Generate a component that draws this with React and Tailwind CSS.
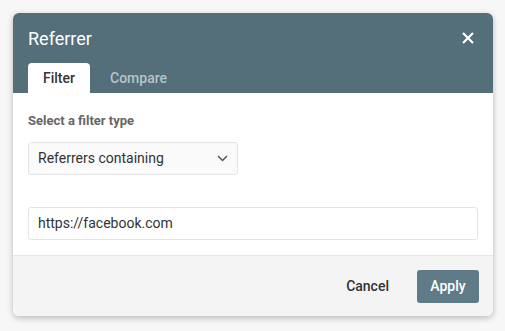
export default function App() {
  return (
    <div className="h-[331px] bg-[#f7f7f7] p-[13px] font-['Roboto',sans-serif]">
      <div className="w-[480px] overflow-hidden rounded-[6px] bg-white shadow-[0_2px_6px_rgba(0,0,0,0.25)]">
        <div className="bg-[#546e7a]">
          <div className="flex h-[50px] items-center justify-between pl-[15px] pr-[19px]">
            <span className="text-[18px] text-white">Referrer</span>
            <svg width="12" height="12" viewBox="0 0 12 12" className="text-white">
              <path d="M1 1L11 11M11 1L1 11" stroke="currentColor" strokeWidth="2.2" />
            </svg>
          </div>
          <div className="flex h-[30px] items-end px-[15px]">
            <div className="flex h-[30px] w-[62px] items-center justify-center rounded-t-[4px] bg-white text-[14px] font-medium text-[#333]">
              Filter
            </div>
            <div className="flex h-[30px] items-center pl-[20px] text-[14px] font-medium text-[#b7c3c9]">
              Compare
            </div>
          </div>
        </div>
        <div className="px-[15px] pb-[15px] pt-[20px]">
          <div className="text-[13px] font-bold leading-[16px] text-[#666]">Select a filter type</div>
          <div className="mt-[13px] flex h-[33px] w-[210px] items-center justify-between rounded-[3px] border border-[#e4e4e4] bg-[#fafafa] pl-[9px] pr-[9px] text-[14px] text-[#333]">
            <span>Referrers containing</span>
            <svg width="11" height="7" viewBox="0 0 11 7">
              <path d="M1 1L5.5 5.5L10 1" stroke="#555" strokeWidth="1.5" fill="none" />
            </svg>
          </div>
          <div className="mt-[32px] flex h-[33px] items-center rounded-[3px] border border-[#e4e4e4] bg-white pl-[9px] text-[14px] text-[#333]">
            https://facebook.com
          </div>
        </div>
        <div className="flex h-[61px] items-start justify-end gap-[28px] border-t border-[#e6e6e6] bg-[#f4f4f4] pr-[14px] pt-[14px]">
          <span className="mt-[6px] text-[14px] font-medium text-[#333]">Cancel</span>
          <div className="flex h-[33px] w-[62px] items-center justify-center rounded-[3px] bg-[#607b88] text-[14px] font-medium text-white">
            Apply
          </div>
        </div>
      </div>
    </div>
  );
}
